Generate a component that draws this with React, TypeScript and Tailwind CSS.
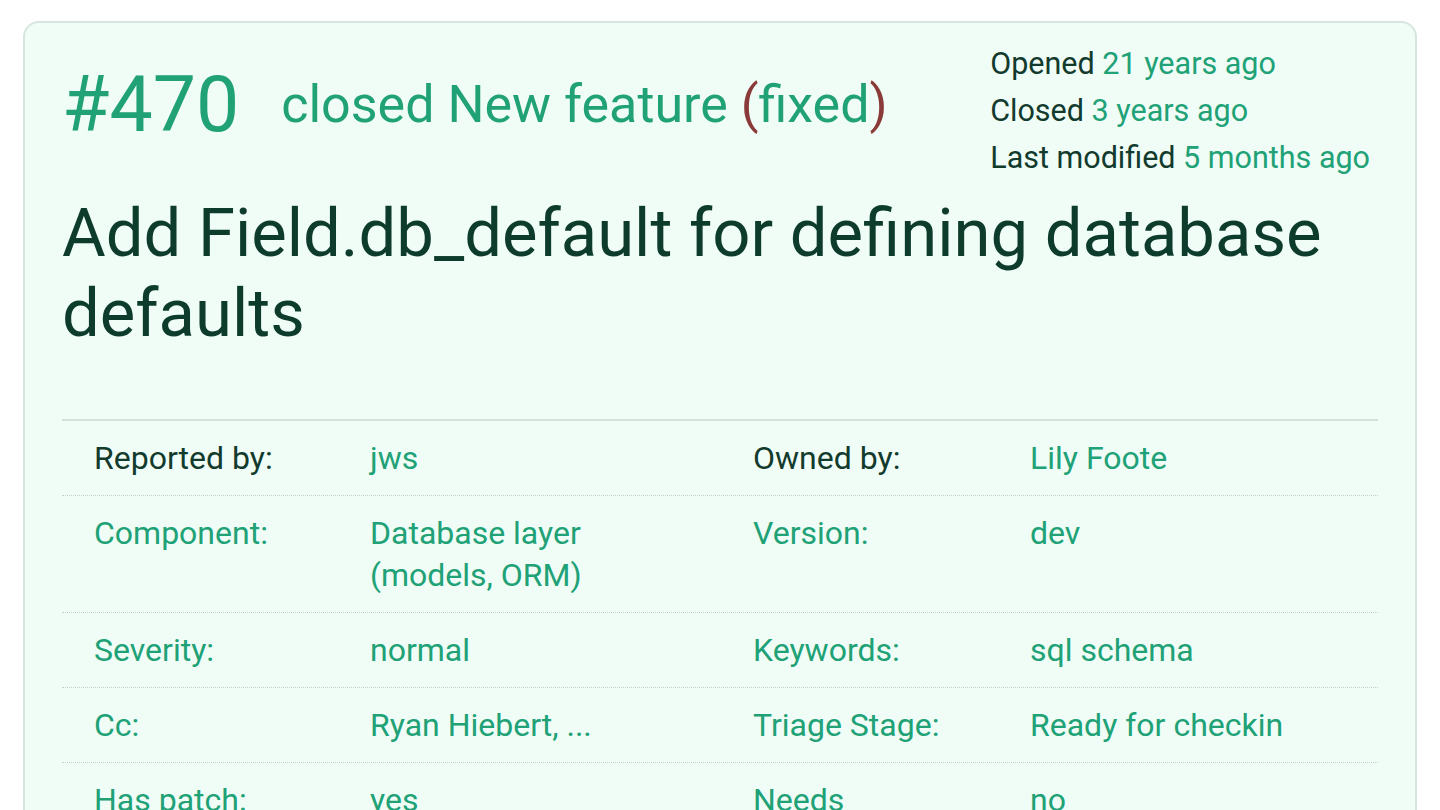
const rows: { label: string; value: string[]; label2: string; value2: string[]; dark?: boolean }[] = [
  { label: "Reported by:", value: ["jws"], label2: "Owned by:", value2: ["Lily Foote"], dark: true },
  { label: "Component:", value: ["Database layer", "(models, ORM)"], label2: "Version:", value2: ["dev"] },
  { label: "Severity:", value: ["normal"], label2: "Keywords:", value2: ["sql schema"] },
  { label: "Cc:", value: ["Ryan Hiebert, ..."], label2: "Triage Stage:", value2: ["Ready for checkin"] },
  { label: "Has patch:", value: ["yes"], label2: "Needs documentation:", value2: ["no"] },
  { label: "Needs tests:", value: ["no"], label2: "Patch needs improvement:", value2: ["no"] },
];

function Row({ row, last }: { row: (typeof rows)[number]; last: boolean }) {
  const labelColor = row.dark ? "text-[#123a2d]" : "text-[#20a176]";
  return (
    <div
      className={`grid grid-cols-[308px_383px_277px_1fr] py-[16px] text-[32px] leading-[42px] ${
        last ? "" : "border-b border-dotted border-[#bcd4c9]"
      }`}
    >
      <div className={`pl-[32px] ${labelColor}`}>{row.label}</div>
      <div className="text-[#20a176]">
        {row.value.map((v) => (
          <div key={v}>{v}</div>
        ))}
      </div>
      <div className={labelColor}>{row.label2}</div>
      <div className="text-[#20a176]">
        {row.value2.map((v) => (
          <div key={v}>{v}</div>
        ))}
      </div>
    </div>
  );
}

export default function App() {
  return (
    <div className="min-h-screen bg-white pt-[21px] px-[23px] font-['Roboto',sans-serif]">
      <div className="rounded-[16px] border-2 border-[#d6e6de] bg-[#effdf6] px-[37px] pt-[17px] pb-8">
        <div className="flex items-start justify-between pr-[8px]">
          <div className="mt-[25px] flex items-center gap-[42px]">
            <span className="text-[77px] leading-[80px] text-[#21a176]">#470</span>
            <span className="text-[52px] leading-[60px] text-[#21a176]">
              closed New feature <span className="text-[#8a3b39]">(</span>fixed
              <span className="text-[#8a3b39]">)</span>
            </span>
          </div>
          <div className="text-[30.5px] leading-[47px] text-[#123a2d]">
            <div>
              Opened <span className="text-[#21a176]">21 years ago</span>
            </div>
            <div>
              Closed <span className="text-[#21a176]">3 years ago</span>
            </div>
            <div>
              Last modified <span className="text-[#21a176]">5 months ago</span>
            </div>
          </div>
        </div>

        <h1 className="mt-[12px] text-[67px] leading-[80px] text-[#0d3b2c]">
          Add Field.db_default for defining database defaults
        </h1>

        <div className="mt-[66px] border-t-2 border-[#d3e2db]">
          {rows.map((r, i) => (
            <Row key={r.label} row={r} last={i === rows.length - 1} />
          ))}
        </div>
      </div>
    </div>
  );
}
